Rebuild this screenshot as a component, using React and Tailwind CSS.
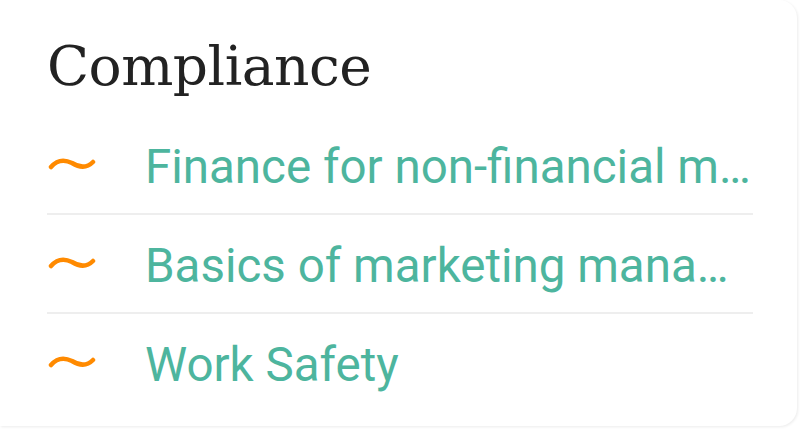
import React from "react";

function Tilde() {
  return (
    <svg width="48" height="16" viewBox="0 0 48 16" className="block">
      <path
        d="M3 11 C 9 4, 16 3, 24 7 C 32 12, 39 12, 45 6"
        fill="none"
        stroke="#ff8a00"
        strokeWidth="4.5"
        strokeLinecap="round"
      />
    </svg>
  );
}

const items = [
  "Finance for non-financial m…",
  "Basics of marketing mana…",
  "Work Safety",
];

export default function App() {
  return (
    <div className="w-[800px] h-[431px] bg-white">
      <div className="w-[797px] h-[426px] bg-white rounded-r-[18px] shadow-[1px_1px_3px_rgba(0,0,0,0.08)] pl-[47px] pr-[44px] pt-[34px]">
        <h2 className="text-[55px] leading-[64px] text-[#222222] font-['DejaVu_Serif',serif] tracking-[-0.5px]">
          Compliance
        </h2>
        <ul className="mt-[18px]">
          {items.map((t, i) => (
            <li
              key={t}
              className={`flex items-center pt-[23px] pb-[18px] ${i < items.length - 1 ? "border-b-2 border-[#eeeeee]" : "border-b-2 border-transparent"}`}
            >
              <span className="w-[98px] shrink-0 flex items-center pl-[1px] -mt-[6px]">
                <Tilde />
              </span>
              <span className="whitespace-nowrap overflow-hidden min-w-0 text-[47.5px] leading-[56px] text-[#4db59e] font-['Roboto',sans-serif]">
                {t}
              </span>
            </li>
          ))}
        </ul>
      </div>
    </div>
  );
}
